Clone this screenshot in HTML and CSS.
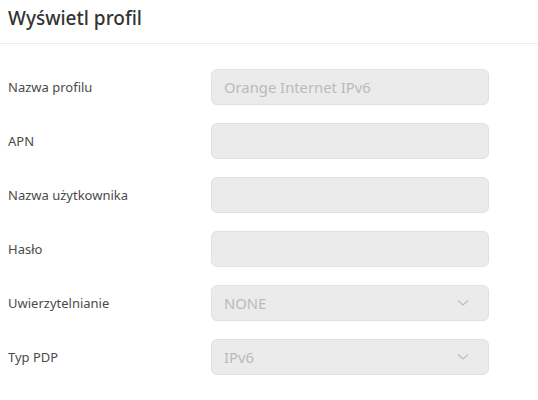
FILE: index.html
```html
<!DOCTYPE html>
<html lang="pl">
<head>
<meta charset="utf-8">
<link rel="stylesheet" href="styles.css">
</head>
<body>
<div class="page">
  <div class="header"><h1 class="title">Wyświetl profil</h1></div>
  <div class="form">
    <div class="row"><span class="label">Nazwa profilu</span><div class="field">Orange Internet IPv6</div></div>
    <div class="row"><span class="label">APN</span><div class="field"></div></div>
    <div class="row"><span class="label">Nazwa użytkownika</span><div class="field"></div></div>
    <div class="row"><span class="label">Hasło</span><div class="field"></div></div>
    <div class="row"><span class="label">Uwierzytelnianie</span><div class="field select"><span>NONE</span><svg class="chev" width="12" height="8" viewBox="0 0 12 8"><path d="M1 1.5 L6 6 L11 1.5" fill="none" stroke="#bcbcbc" stroke-width="1.1"/></svg></div></div>
    <div class="row"><span class="label">Typ PDP</span><div class="field select"><span>IPv6</span><svg class="chev" width="12" height="8" viewBox="0 0 12 8"><path d="M1 1.5 L6 6 L11 1.5" fill="none" stroke="#bcbcbc" stroke-width="1.1"/></svg></div></div>
  </div>
</div>
</body>
</html>
```
FILE: styles.css
```css
html, body { margin: 0; padding: 0; background: #fff; }
body { font-family: "Noto Sans", "Open Sans", sans-serif; color: #333; }
.page { width: 538px; }
.header { height: 44px; border-bottom: 1px solid #ececec; display: flex; align-items: center; padding: 0 8px; box-sizing: border-box; }
.title { margin: 0; font-size: 19px; font-weight: 500; color: #333; line-height: 1; padding-bottom: 6px; }
.form { padding-top: 25px; display: flex; flex-direction: column; gap: 18px; }
.row { display: flex; align-items: center; padding-left: 8px; }
.label { width: 203px; font-size: 13px; color: #4a4a4a; }
.field { width: 278px; height: 36px; box-sizing: border-box; background: #ebebeb; border: 1px solid #e1e1e1; border-radius: 6px; display: flex; align-items: center; padding: 0 12px; font-size: 14.8px; color: #bababa; }
.select { justify-content: space-between; padding-right: 19px; }
.chev { display: block; }
```
